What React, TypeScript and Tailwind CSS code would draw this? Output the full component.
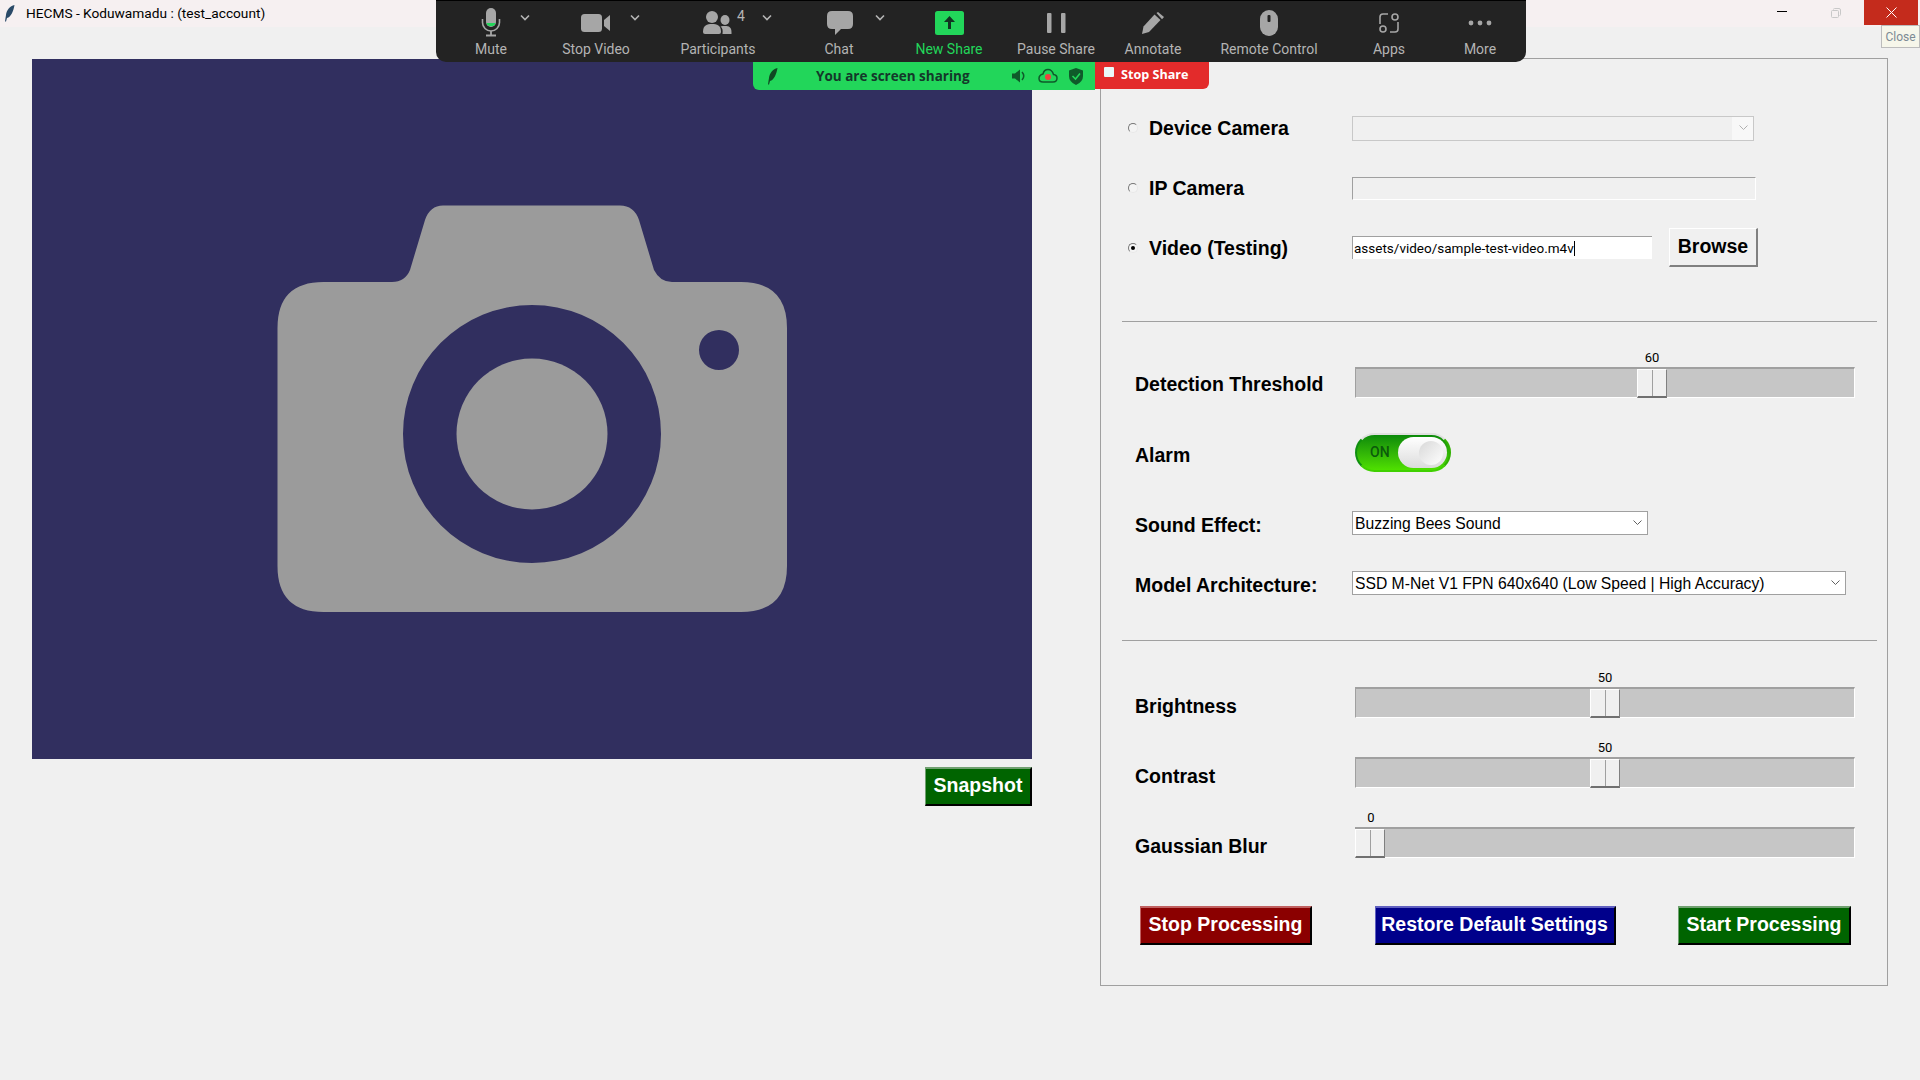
import React from "react";

const Chevron = ({ offset }: { offset: string }) => (
  <svg className={`absolute top-[13px] ${offset}`} width="10" height="8" viewBox="0 0 10 8" fill="none" stroke="#b4b4b4" strokeWidth="1.6">
    <path d="M1 1.5 L5 5.5 L9 1.5" />
  </svg>
);

const MicIcon = () => (
  <svg width="22" height="29" viewBox="0 0 22 29">
    <rect x="6" y="0" width="10" height="19" rx="5" fill="#a6a6a6" />
    <path d="M6.3 15 h9.4 a5 5 0 0 1 -9.4 0z" fill="#22d65a" />
    <path d="M2.5 11 v3.5 a8.5 8.5 0 0 0 17 0 v-3.5" fill="none" stroke="#a6a6a6" strokeWidth="1.6" />
    <path d="M11 23 v4 M6 27.5 h10" stroke="#a6a6a6" strokeWidth="1.8" />
  </svg>
);
const VideoIcon = () => (
  <svg width="30" height="20" viewBox="0 0 30 20" fill="#a6a6a6">
    <rect x="0" y="1" width="21" height="18" rx="3.5" />
    <path d="M23 7 L29 2 V18 L23 13 Z" />
  </svg>
);
const PeopleIcon = () => (
  <svg width="30" height="23" viewBox="0 0 30 23" fill="#a6a6a6">
    <ellipse cx="9" cy="6" rx="6" ry="6" />
    <path d="M0 21 C0 14 4 13 9 13 C14 13 18 14 18 21 Q18 23 16 23 H2 Q0 23 0 21Z" />
    <ellipse cx="22" cy="9" rx="4.5" ry="5" />
    <path d="M19.5 23 C20 19 19.5 17 17.5 15.5 C19 15 20.5 15 22 15 C26 15 28.5 16 28.5 21 V23 Z" />
  </svg>
);
const ChatIcon = () => (
  <svg className="ml-[2px]" width="26" height="24" viewBox="0 0 26 24" fill="#a6a6a6">
    <path d="M5 0 H21 Q26 0 26 5 V13 Q26 18 21 18 H14 L8 24 V18 H5 Q0 18 0 13 V5 Q0 0 5 0Z" />
  </svg>
);
const ShareIcon = () => (
  <svg width="29" height="24" viewBox="0 0 29 24">
    <rect width="29" height="24" rx="2.5" fill="#22d65a" />
    <path d="M14.5 5 L20 11 H16 V18 H13 V11 H9 Z" fill="#123322" />
  </svg>
);
const PauseIcon = () => (
  <svg width="19" height="20" viewBox="0 0 19 20" fill="#a6a6a6">
    <rect x="0" y="0" width="4.5" height="20" rx="1" />
    <rect x="14" y="0" width="4.5" height="20" rx="1" />
  </svg>
);
const PencilIcon = () => (
  <svg width="23" height="22" viewBox="0 0 23 22" fill="#a6a6a6">
    <path d="M0 22 L1.5 14.5 L12.5 2.5 L18.5 8 L7 20 Z" />
    <path d="M14.5 1 L16 0 L22 5 L20 7.2 Z" />
  </svg>
);
const MouseIcon = () => (
  <svg width="18" height="26" viewBox="0 0 18 26">
    <rect x="0" y="0" width="18" height="26" rx="9" fill="#a6a6a6" />
    <rect x="7.5" y="5" width="3" height="7" rx="1" fill="#232323" />
  </svg>
);
const AppsIcon = () => (
  <svg width="20" height="20" viewBox="0 0 20 20" fill="none" stroke="#a6a6a6" strokeWidth="1.6">
    <path d="M1 11 V4 Q1 1 4 1 H9" />
    <path d="M19 9 V16 Q19 19 16 19 H11" />
    <circle cx="16" cy="4" r="3" />
    <circle cx="4" cy="16" r="3" />
  </svg>
);
const DotsIcon = () => (
  <svg width="24" height="6" viewBox="0 0 24 6" fill="#a6a6a6">
    <circle cx="3" cy="3" r="2.4" />
    <circle cx="12" cy="3" r="2.4" />
    <circle cx="21" cy="3" r="2.4" />
  </svg>
);

const Feather = ({ className, fill }: { className?: string; fill: string }) => (
  <svg className={className} width="10" height="17" viewBox="0 0 10 17">
    <path d="M9.5 0 C5 1 1.5 5 1 10 L0.5 13 L0 16.5 L1 16.5 L2 13 C6 12 8.5 6 9.5 0Z" fill={fill} />
  </svg>
);

const TOOLS: { label: string; w: string; icon: React.ReactNode; chevron?: string; green?: boolean; badge?: boolean }[] = [
  { label: "Mute", w: "w-[108px]", icon: <MicIcon />, chevron: "left-[83px]" },
  { label: "Stop Video", w: "w-[102px]", icon: <VideoIcon />, chevron: "left-[85px]" },
  { label: "Participants", w: "w-[142px]", icon: <PeopleIcon />, chevron: "left-[115px]", badge: true },
  { label: "Chat", w: "w-[100px]", icon: <ChatIcon />, chevron: "left-[86px]" },
  { label: "New Share", w: "w-[120px]", icon: <ShareIcon />, green: true },
  { label: "Pause Share", w: "w-[94px]", icon: <PauseIcon /> },
  { label: "Annotate", w: "w-[100px]", icon: <PencilIcon /> },
  { label: "Remote Control", w: "w-[132px]", icon: <MouseIcon /> },
  { label: "Apps", w: "w-[108px]", icon: <AppsIcon /> },
  { label: "More", w: "w-[74px]", icon: <DotsIcon /> },
];

const Toolbar = () => (
  <div className="absolute left-[436px] top-0 z-10 flex">
    <div className="flex flex-col items-start">
      <div className="flex h-[62px] w-[1090px] rounded-b-[10px] border-t border-black bg-[#232323] pl-[1px]">
        {TOOLS.map((t) => (
          <div key={t.label} className={`relative flex shrink-0 flex-col items-center ${t.w}`}>
            <div className="flex h-[39px] w-full items-center justify-center pt-[4px]">{t.icon}</div>
            {t.chevron && <Chevron offset={t.chevron} />}
            {t.badge && <span className="absolute left-[90px] top-[5px] font-['Roboto',sans-serif] text-[14px] text-[#b4b4b4]">4</span>}
            <span className={`whitespace-nowrap font-['Roboto',sans-serif] text-[14px] leading-[18px] ${t.green ? "text-[#22d65a]" : "text-[#b4b4b4]"}`}>{t.label}</span>
          </div>
        ))}
      </div>
      <div className="ml-[317px] flex items-start">
        <div className="flex h-[28px] w-[342px] items-center rounded-bl-[6px] bg-[#22d65a] pl-[15px]">
          <Feather fill="#0f4a22" />
          <span className="ml-[38px] whitespace-nowrap font-['Open_Sans',sans-serif] text-[13.5px] font-bold text-[#14382a]">You are screen sharing</span>
          <svg className="ml-[41px]" width="16" height="16" viewBox="0 0 16 16" fill="#0f5a2a">
            <path d="M1 5.5 H4 L9 1.5 V14.5 L4 10.5 H1Z" />
            <path d="M11 4 Q14.5 8 11 12" fill="none" stroke="#0f5a2a" strokeWidth="1.5" />
          </svg>
          <svg className="ml-[11px]" width="20" height="16" viewBox="0 0 20 16">
            <path d="M5 14 H15 Q19 14 19 10 Q19 7 15.5 6.5 Q14 1.5 10 1.5 Q6 1.5 5 6 Q1 7 1 10.5 Q1 14 5 14Z" fill="none" stroke="#0f5a2a" strokeWidth="1.5" />
            <circle cx="10" cy="9" r="3" fill="#f04040" />
          </svg>
          <svg className="ml-[11px]" width="14" height="17" viewBox="0 0 14 17">
            <path d="M7 0 L14 2.5 V8 Q14 14 7 17 Q0 14 0 8 V2.5Z" fill="#0f5a2a" />
            <path d="M3.5 8 L6.5 11 L11 5.5" fill="none" stroke="#22d65a" strokeWidth="1.6" />
          </svg>
        </div>
        <div className="flex h-[27px] w-[114px] items-start rounded-br-[6px] bg-[#e32b2b] pl-[9px] pt-[4px]">
          <div className="mt-[1px] h-[10px] w-[10px] rounded-[1px] bg-[#eaf8f8]" />
          <span className="ml-[7px] whitespace-nowrap font-['Open_Sans',sans-serif] text-[12.6px] font-bold leading-[18px] text-white">Stop Share</span>
        </div>
      </div>
    </div>
  </div>
);

const TitleBar = () => (
  <div className="relative flex h-[27px] items-center bg-[#f6f0f1]">
    <Feather className="ml-[5px]" fill="#2a4a68" />
    <span className="ml-[11px] whitespace-nowrap font-['Roboto',sans-serif] text-[13.7px] text-black">HECMS - Koduwamadu : (test_account)</span>
    <div className="ml-auto mr-[2px] flex h-[25px] self-start">
      <div className="flex w-[54px] items-center justify-center pb-[2px] pr-[3px]"><div className="h-[1px] w-[10px] bg-black" /></div>
      <div className="flex w-[54px] items-center justify-center pr-[3px]">
        <svg width="10" height="10" viewBox="0 0 10 10" fill="none" stroke="#c8c8c8" strokeWidth="1">
          <rect x="0.5" y="2.5" width="7" height="7" rx="1" />
          <path d="M2.5 1.5 Q2.5 0.5 3.5 0.5 H8 Q9.5 0.5 9.5 2 V6.5 Q9.5 7.5 8.5 7.5" />
        </svg>
      </div>
      <div className="flex w-[54px] items-center justify-center bg-[#c42b1c]">
        <svg width="11" height="11" viewBox="0 0 11 11" stroke="#ffffff" strokeWidth="1"><path d="M0.5 0.5 L10.5 10.5 M10.5 0.5 L0.5 10.5" /></svg>
      </div>
    </div>
    <div className="absolute right-0 top-[25px] z-20 flex h-[23px] w-[39px] items-center justify-center border border-[#bcbcbc] bg-[#f6f6ea] font-['Roboto',sans-serif] text-[12px] text-[#7c8a94]">Close</div>
  </div>
);

const Radio = ({ on }: { on?: boolean }) => (
  <div className="flex h-[10px] w-[10px] shrink-0 items-center justify-center rounded-full border border-t-[#777777] border-l-[#777777] border-r-[#e8e8e8] border-b-[#e8e8e8] bg-[#f4f4f4]">
    {on && <div className="h-[4px] w-[4px] rounded-full bg-black" />}
  </div>
);

const SmallChevron = ({ color }: { color: string }) => (
  <svg width="9" height="6" viewBox="0 0 9 6" fill="none" stroke={color} strokeWidth="1"><path d="M0.5 0.5 L4.5 4.5 L8.5 0.5" /></svg>
);

const Label = ({ children, className = "" }: { children: React.ReactNode; className?: string }) => (
  <span className={`whitespace-nowrap font-['Liberation_Sans',sans-serif] text-[19.5px] font-bold leading-[22px] text-black ${className}`}>{children}</span>
);

const SourceRow = ({ label, on, children }: { label: string; on?: boolean; children: React.ReactNode }) => (
  <div className="flex h-[60px] items-center">
    <div className="ml-[27px] flex w-[224px] items-center gap-[11px]">
      <Radio on={on} />
      <Label>{label}</Label>
    </div>
    {children}
  </div>
);

const Slider = ({ label, value, mt, labelPad }: { label: string; value: number; mt: string; labelPad: string }) => {
  const left = Math.round((value / 100) * 470);
  return (
    <div className={`flex h-[48px] ${mt}`}>
      <div className={`ml-[34px] flex w-[220px] items-start ${labelPad}`}>
        <Label>{label}</Label>
      </div>
      <div className="w-[500px]">
        <div className="h-[15px] w-[30px] text-center font-['Roboto',sans-serif] text-[13px] leading-[15px] text-black" style={{ marginLeft: value === 0 ? 1 : left }}>{value}</div>
        <div className="relative mt-[2px] h-[31px] border-t-2 border-r border-b border-l border-t-[#a0a0a0] border-l-[#a0a0a0] border-r-white border-b-white bg-[#c6c6c6]">
          <div className="absolute top-0 bottom-[-1px] flex w-[30px] justify-center border-t border-r border-b-2 border-l border-t-white border-l-white border-r-[#808080] border-b-[#707070] bg-[#f0f0f0]" style={{ left: left - 1 }}>
            <div className="h-full w-[1px] bg-[#a0a0a0]" />
          </div>
        </div>
      </div>
    </div>
  );
};

const ComboBox = ({ text, w }: { text: string; w: string }) => (
  <div className={`flex h-[24px] items-center justify-between border border-[#a0a0a0] bg-white pl-[2px] pr-[5px] ${w}`}>
    <span className="whitespace-nowrap pt-[1px] font-['Liberation_Sans',sans-serif] text-[15.7px] leading-[20px] text-black">{text}</span>
    <SmallChevron color="#606060" />
  </div>
);

const ActionButton = ({ text, bg, light, className = "" }: { text: string; bg: string; light: string; className?: string }) => (
  <div className={`flex items-center justify-center border-t-2 border-l border-r-2 border-b-2 border-r-black border-b-black pb-[1px] font-['Liberation_Sans',sans-serif] text-[19.5px] font-bold text-white ${bg} ${light} ${className}`}>{text}</div>
);

const CameraArt = () => (
  <svg width="1000" height="700" viewBox="32 59 1000 700">
    <path
      fillRule="evenodd"
      fill="#9b9b9b"
      d="M323.5 282 H392 Q405 282 410 270 L425 220 Q430 205.5 443 205.5 H620 Q634 205.5 639 220 L654 270 Q660 282 672 282 H741 Q787 282 787 328 V566 Q787 612 741 612 H323.5 Q277.5 612 277.5 566 V328 Q277.5 282 323.5 282 Z
         M532 305 A129 129 0 1 0 532 563 A129 129 0 1 0 532 305 Z
         M719 330 A20 20 0 1 0 719 370 A20 20 0 1 0 719 330 Z"
    />
    <circle cx="532" cy="434" r="75.5" fill="#9b9b9b" />
  </svg>
);

export default function App() {
  return (
    <div className="relative h-[1080px] w-[1920px] overflow-hidden bg-[#f0f0f0]">
      <TitleBar />
      <Toolbar />
      <div className="flex">
        <div className="ml-[32px] mt-[32px] flex w-[1000px] flex-col">
          <div className="h-[700px] bg-[#312f5f]"><CameraArt /></div>
          <ActionButton text="Snapshot" bg="bg-[#006400]" light="border-t-[#70a070] border-l-[#70a070]" className="mt-[8px] h-[39px] w-[107px] self-end" />
        </div>
        <div className="ml-[68px] mt-[31px] flex h-[928px] w-[788px] flex-col border border-[#a0a0a0]">
          <div className="mt-[39px]">
            <SourceRow label="Device Camera">
              <div className="flex h-[25px] w-[402px] justify-end border border-[#c8c8c8] bg-[#f0f0f0]">
                <div className="flex w-[21px] items-center justify-center bg-[#f8f8f8] pl-[1px]"><SmallChevron color="#b0b0b0" /></div>
              </div>
            </SourceRow>
            <SourceRow label="IP Camera">
              <div className="h-[23px] w-[404px] border-t border-l border-r border-b border-t-[#a0a0a0] border-l-[#a0a0a0] border-r-white border-b-white bg-[#f0f0f0]" />
            </SourceRow>
            <SourceRow label="Video (Testing)" on>
              <div className="mb-[1px] flex h-[23px] w-[300px] items-center border-t border-l border-t-[#a0a0a0] border-l-[#a0a0a0] bg-white pl-[1px]">
                <span className="whitespace-nowrap font-['Roboto',sans-serif] text-[13.5px] text-black">assets/video/sample-test-video.m4v</span>
                <div className="h-[15px] w-[1px] bg-black" />
              </div>
              <div className="mb-[2px] ml-[17px] flex h-[39px] w-[89px] items-center justify-center border-t border-l border-r-2 border-b-2 border-t-white border-l-white border-r-[#808080] border-b-[#808080] font-['Liberation_Sans',sans-serif] text-[19.5px] font-bold text-black">Browse</div>
            </SourceRow>
          </div>

          <div className="ml-[21px] mr-[10px] mt-[43px] h-[1px] bg-[#a0a0a0]" />

          <Slider label="Detection Threshold" value={60} mt="mt-[28px]" labelPad="pt-[23px]" />

          <div className="mt-[35px] flex h-[39px]">
            <div className="ml-[34px] w-[220px] pt-[11px]"><Label>Alarm</Label></div>
            <div className="flex h-[39px] w-[96px] items-center justify-between rounded-full border-2 border-t-[#e0e0e0] border-r-[#30b000] border-b-[#40d000] border-l-[#109010] bg-gradient-to-b from-[#0a8a0a] to-[#4fe000] pl-[13px] pr-[2px]">
              <span className="font-['Roboto',sans-serif] text-[14px] font-medium text-[#0b5a0b]">ON</span>
              <div className="flex h-[31px] w-[49px] items-center justify-end rounded-full bg-gradient-to-b from-white to-[#dcdcdc] pr-[4px]">
                <div className="h-[24px] w-[24px] rounded-full bg-gradient-to-br from-[#d8d8d8] to-[#ffffff]" />
              </div>
            </div>
          </div>

          <div className="mt-[39px] flex h-[24px]">
            <div className="ml-[34px] w-[217px] pt-[3px]"><Label>Sound Effect:</Label></div>
            <ComboBox text="Buzzing Bees Sound" w="w-[296px]" />
          </div>

          <div className="mt-[36px] flex h-[24px]">
            <div className="ml-[34px] w-[217px] pt-[3px]"><Label>Model Architecture:</Label></div>
            <ComboBox text="SSD M-Net V1 FPN 640x640 (Low Speed | High Accuracy)" w="w-[494px]" />
          </div>

          <div className="ml-[21px] mr-[10px] mt-[45px] h-[1px] bg-[#a0a0a0]" />

          <Slider label="Brightness" value={50} mt="mt-[29px]" labelPad="pt-[25px]" />
          <Slider label="Contrast" value={50} mt="mt-[22px]" labelPad="pt-[25px]" />
          <Slider label="Gaussian Blur" value={0} mt="mt-[22px]" labelPad="pt-[25px]" />

          <div className="mt-[48px] flex h-[39px] justify-between pl-[39px] pr-[36px]">
            <ActionButton text="Stop Processing" bg="bg-[#8b0000]" light="border-t-[#c06060] border-l-[#c06060]" className="w-[172px]" />
            <ActionButton text="Restore Default Settings" bg="bg-[#00008b]" light="border-t-[#6060c0] border-l-[#6060c0]" className="w-[241px]" />
            <ActionButton text="Start Processing" bg="bg-[#006400]" light="border-t-[#70a070] border-l-[#70a070]" className="w-[173px]" />
          </div>
        </div>
      </div>
    </div>
  );
}
